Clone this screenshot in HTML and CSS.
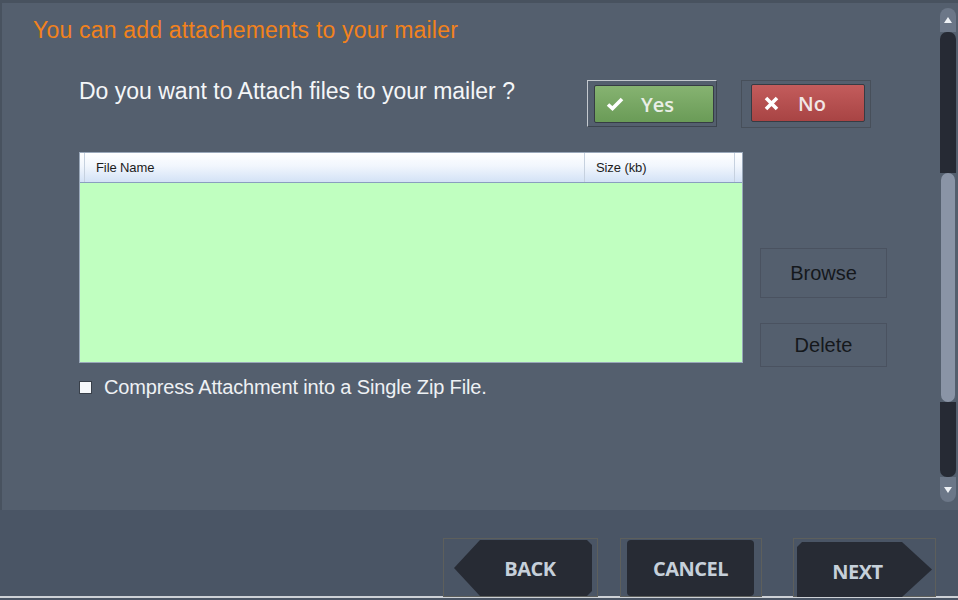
FILE: index.html
```html
<!DOCTYPE html>
<html lang="en">
<head>
    <meta charset="UTF-8">
    <title>Mailer - Attachments</title>
    <link rel="stylesheet" href="styles.css">
</head>
<body>
    <div class="window">
        <div class="panel">
            <div class="content">
                <h1 class="title">You can add attachements to your mailer</h1>

                <!-- Attach question -->
                <div class="question">
                    <p class="question-text">Do you want to Attach files to your mailer ?</p>
                    <div class="choice choice-yes">
                        <button class="btn-yes">
                            <svg width="18" height="14" viewBox="0 0 18 14"><path d="M2 7.5 L6.5 11.5 L16 2" fill="none" stroke="#fff" stroke-width="3.6"/></svg>
                            Yes
                        </button>
                    </div>
                    <div class="choice choice-no">
                        <button class="btn-no">
                            <svg width="15" height="15" viewBox="0 0 15 15"><path d="M2 2 L13 13 M13 2 L2 13" fill="none" stroke="#fff" stroke-width="3.6"/></svg>
                            No
                        </button>
                    </div>
                </div>

                <!-- File list -->
                <div class="files">
                    <div class="file-list">
                        <div class="file-head">
                            <div class="col col-pad"></div>
                            <div class="col col-name">File Name</div>
                            <div class="col col-size">Size (kb)</div>
                            <div class="col col-rest"></div>
                        </div>
                        <div class="file-body"></div>
                    </div>
                    <div class="file-actions">
                        <button class="side-btn btn-browse">Browse</button>
                        <button class="side-btn btn-delete">Delete</button>
                    </div>
                </div>

                <label class="zip"><span class="box"></span>Compress Attachment into a Single Zip File.</label>
            </div>

            <div class="scrollbar">
                <div class="sb-cap sb-up"><span class="arrow-up"></span></div>
                <div class="sb-track sb-track-top"></div>
                <div class="sb-thumb"></div>
                <div class="sb-track sb-track-bottom"></div>
                <div class="sb-cap sb-down"><span class="arrow-down"></span></div>
            </div>
        </div>

        <!-- Wizard navigation -->
        <div class="footer">
            <div class="nav-frame frame-back"><button class="nav-btn btn-back">BACK</button></div>
            <div class="nav-frame frame-cancel"><button class="nav-btn btn-cancel">CANCEL</button></div>
            <div class="nav-frame frame-next"><button class="nav-btn btn-next">NEXT</button></div>
        </div>
    </div>
</body>
</html>
```

FILE: styles.css
```css
body {
    margin: 0;
    padding: 0;
    background-color: #4a5565;
    font-family: "Liberation Sans", Arial, sans-serif;
}
.window {
    width: 958px;
    height: 600px;
    overflow: hidden;
}
.panel {
    display: flex;
    height: 507px;
    background-color: #545f6e;
    border-top: 3px solid #48525f;
    border-left: 2px solid #48525f;
}
.content {
    flex: 1;
    padding-top: 14px;
}
.title {
    margin: 0 0 37px 31px;
    font-size: 23px;
    line-height: 26px;
    font-weight: normal;
    color: #f2821c;
    letter-spacing: 0.2px;
}
.question {
    display: flex;
    align-items: flex-start;
    padding-left: 77px;
    height: 48px;
}
.question-text {
    flex: 0 0 508px;
    margin: -2px 0 0 0;
    font-size: 23px;
    line-height: 26px;
    color: #f4f6f8;
}
.choice {
    box-sizing: border-box;
    width: 130px;
}
.choice-yes {
    height: 47px;
    padding: 4px 3px 3px 6px;
    border: 1px solid #3d4550;
    border-top-color: #c4c9cf;
    border-left-color: #c4c9cf;
}
.choice-no {
    height: 48px;
    margin-left: 24px;
    padding: 3px 5px 5px 9px;
    border: 1px solid #474f5a;
}
.btn-yes,
.btn-no {
    display: flex;
    align-items: center;
    height: 38px;
    padding: 0;
    border: 1px solid #363c44;
    border-radius: 2px;
    font-family: "Open Sans", sans-serif;
    font-size: 20px;
    font-weight: 600;
    color: #e9eee6;
    cursor: pointer;
}
.btn-yes {
    width: 120px;
    padding-left: 11px;
    background: linear-gradient(#86b371, #6a9b57);
}
.btn-yes svg {
    margin-right: 17px;
}
.btn-no {
    width: 114px;
    padding-left: 12px;
    background: linear-gradient(#c35c5c, #a84444);
    color: #f1e6e6;
}
.btn-no svg {
    margin-right: 19px;
}
.files {
    display: grid;
    grid-template-columns: 664px 127px;
    column-gap: 17px;
    margin-top: 24px;
    padding-left: 77px;
}
.file-list {
    height: 211px;
    box-sizing: border-box;
    border: 1px solid #9aa8ba;
    background-color: #c0ffc0;
}
.file-head {
    display: flex;
    height: 29px;
    border-bottom: 1px solid #8a9fbf;
    background: linear-gradient(#ffffff, #f1f6fd 45%, #d3e2f6);
    font-size: 13px;
    line-height: 30px;
    color: #1c1c1c;
    letter-spacing: -0.1px;
}
.col {
    box-sizing: border-box;
    border-right: 1px solid #c6d1df;
}
.col-pad {
    width: 5px;
}
.col-name {
    width: 500px;
    padding-left: 11px;
}
.col-size {
    width: 150px;
    padding-left: 11px;
}
.col-rest {
    flex: 1;
    border-right: none;
}
.file-actions {
    display: flex;
    flex-direction: column;
    padding-top: 96px;
}
.side-btn {
    width: 127px;
    border: 1px solid #4a5260;
    background: transparent;
    font-family: "Liberation Sans", Arial, sans-serif;
    font-size: 20px;
    color: #15181c;
    cursor: pointer;
}
.btn-browse {
    height: 50px;
}
.btn-delete {
    height: 44px;
    margin-top: 25px;
}
.zip {
    display: flex;
    align-items: center;
    margin: 9px 0 0 77px;
    font-size: 20px;
    line-height: 22px;
    color: #eef1f4;
    letter-spacing: -0.15px;
}
.box {
    width: 11px;
    height: 11px;
    margin-right: 12px;
    border: 1px solid #39404a;
    background-color: #f6f8fb;
}
.scrollbar {
    display: flex;
    flex-direction: column;
    width: 16px;
    margin: 5px 2px 8px 0;
}
.sb-cap {
    display: flex;
    align-items: center;
    justify-content: center;
    height: 24px;
    background-color: #6c7788;
}
.sb-up {
    border-radius: 8px 8px 0 0;
}
.sb-down {
    height: 25px;
    border-radius: 0 0 8px 8px;
}
.arrow-up {
    border-left: 4px solid transparent;
    border-right: 4px solid transparent;
    border-bottom: 6px solid #eef2f6;
}
.arrow-down {
    border-left: 4px solid transparent;
    border-right: 4px solid transparent;
    border-top: 6px solid #eef2f6;
}
.sb-track {
    background-color: #262a34;
}
.sb-track-top {
    height: 141px;
    border-radius: 7px 7px 0 0;
}
.sb-track-bottom {
    flex: 1;
    border-radius: 0 0 7px 7px;
}
.sb-thumb {
    height: 229px;
    margin: 0 1px;
    border-radius: 7px;
    background-color: #8a94a6;
}
.footer {
    display: flex;
    justify-content: flex-end;
    align-items: flex-start;
    height: 88px;
    padding: 28px 22px 0 0;
    box-sizing: border-box;
    border-bottom: 2px solid #cdd1d6;
}
.nav-frame {
    box-sizing: border-box;
    height: 59px;
    border: 1px solid #5d5f5c;
}
.frame-back {
    width: 155px;
    padding: 1px 5px 0 10px;
}
.frame-cancel {
    width: 142px;
    margin-left: 22px;
    padding: 1px 7px 0 6px;
}
.frame-next {
    width: 143px;
    margin-left: 31px;
    padding: 3px 3px 0 3px;
}
.nav-btn {
    height: 56px;
    padding: 0;
    border: none;
    background-color: #272b34;
    font-family: "Open Sans", sans-serif;
    font-size: 20px;
    font-weight: 700;
    color: #c6d0da;
    letter-spacing: -0.5px;
    cursor: pointer;
}
.btn-back {
    width: 138px;
    padding-left: 14px;
    clip-path: polygon(0 50%, 26px 0, calc(100% - 5px) 0, 100% 5px, 100% calc(100% - 5px), calc(100% - 5px) 100%, 26px 100%);
}
.btn-cancel {
    width: 127px;
    border-radius: 4px;
}
.btn-next {
    width: 135px;
    height: 55px;
    padding-top: 4px;
    padding-right: 14px;
    clip-path: polygon(0 5px, 5px 0, calc(100% - 30px) 0, 100% 50%, calc(100% - 30px) 100%, 0 100%);
}
```
